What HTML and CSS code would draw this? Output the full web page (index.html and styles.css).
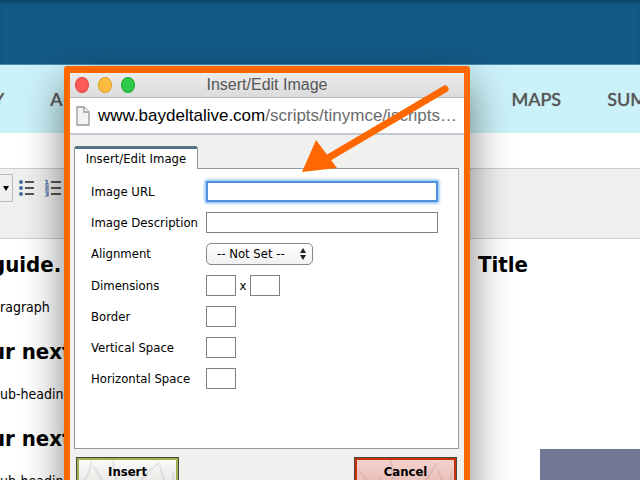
FILE: index.html
```html
<!DOCTYPE html>
<html lang="en">

<head>
    <meta charset="UTF-8">
    <meta name="viewport" content="width=device-width, initial-scale=1.0">
    <title>Insert/Edit Image</title>
    <link rel="stylesheet" href="styles.css">
</head>

<body>
    <header class="banner"></header>

    <nav class="main-nav">
        <ul>
            <li><a href="#">Y</a></li>
            <li><a href="#">A</a></li>
        </ul>
        <ul>
            <li><a href="#">MAPS</a></li>
            <li><a href="#">SUM</a></li>
        </ul>
    </nav>

    <div class="toolbar">
        <button class="tool-drop" type="button" aria-label="More">
            <svg width="6" height="5" viewBox="0 0 6 5"><path d="M0 0h6L3 5z" fill="#000"/></svg>
        </button>
        <button class="tool-btn" type="button" aria-label="Bulleted list">
            <svg width="17" height="18" viewBox="0 0 17 18">
                <g fill="#4667a8"><circle cx="2" cy="3" r="2"/><circle cx="2" cy="9" r="2"/><circle cx="2" cy="15" r="2"/></g>
                <path d="M6 3h9M6 9h9M6 15h9" stroke="#222" stroke-width="1.4"/>
            </svg>
        </button>
        <button class="tool-btn" type="button" aria-label="Numbered list">
            <svg width="17" height="18" viewBox="0 0 17 18">
                <path d="M0 1.500h2V5M0 5h4M0 7h3v2H1v2h3M0 13h3v2H1h2v2H0" fill="none" stroke="#4667a8" stroke-width="1.2"/>
                <path d="M6 3h10M6 9h10M6 15h10" stroke="#222" stroke-width="1.4"/>
            </svg>
        </button>
    </div>

    <main class="editor">
        <div class="editor-left">
            <h2>guide.</h2>
            <p>ragraph</p>
            <h2>ur next</h2>
            <p>ub-heading</p>
            <h2>ur next</h2>
            <p>ub-heading</p>
        </div>
        <div class="editor-right">
            <h2>Title</h2>
            <div class="picture"></div>
        </div>
    </main>

    <!-- Popup window -->
    <section class="popup">
        <div class="title-bar">
            <div class="lights">
                <span class="light red"></span>
                <span class="light yellow"></span>
                <span class="light green"></span>
            </div>
            <h1>Insert/Edit Image</h1>
        </div>

        <div class="address-bar">
            <svg width="14" height="20" viewBox="0 0 14 20">
                <path d="M1 1h7l5 5v13H1z" fill="#f3f3f3" stroke="#999" stroke-width="1.3"/>
                <path d="M8 1v5h5" fill="#fff" stroke="#999" stroke-width="1.3"/>
            </svg>
            <p><span class="host">www.baydeltalive.com</span>/scripts/tinymce/jscripts…</p>
        </div>

        <form class="popup-body">
            <a class="tab" href="#panel">Insert/Edit Image</a>
            <div class="panel" id="panel">
                <div class="row">
                    <label for="url">Image URL</label>
                    <input class="wide active" type="text" id="url">
                </div>
                <div class="row">
                    <label for="description">Image Description</label>
                    <input class="wide" type="text" id="description">
                </div>
                <div class="row select-row">
                    <label for="align">Alignment</label>
                    <div class="select-box">
                        <select id="align">
                            <option>-- Not Set --</option>
                        </select>
                        <svg width="6" height="12" viewBox="0 0 6 12"><path d="M0 5h6L3 0zM0 7h6l-3 5z" fill="#222"/></svg>
                    </div>
                </div>
                <div class="row">
                    <label for="width">Dimensions</label>
                    <div class="pair">
                        <input class="small" type="text" id="width">
                        <label for="height">x</label>
                        <input class="small" type="text" id="height">
                    </div>
                </div>
                <div class="row">
                    <label for="border">Border</label>
                    <input class="small" type="text" id="border">
                </div>
                <div class="row">
                    <label for="vspace">Vertical Space</label>
                    <input class="small" type="text" id="vspace">
                </div>
                <div class="row">
                    <label for="hspace">Horizontal Space</label>
                    <input class="small" type="text" id="hspace">
                </div>
            </div>

            <div class="actions">
                <button class="action insert" type="button">
                    <svg viewBox="0 0 98 26"><path d="M4 26Q12 16 14 3M28 26L16 8M38 26Q38 14 34 0M60 26Q64 16 80 4M86 26L80 6M92 26L94 12"/></svg>
                    <span>Insert</span>
                </button>
                <button class="action cancel" type="button">
                    <svg viewBox="0 0 98 26"><path d="M4 12L16 26M18 26L26 18M36 26Q38 14 34 0M66 26Q72 16 80 4M86 26L80 10M92 26L94 12"/></svg>
                    <span>Cancel</span>
                </button>
            </div>
        </form>
    </section>

    <svg class="arrow" width="152" height="94" viewBox="0 0 152 94">
        <path d="M145 9L28 78" fill="none" stroke="#ff6700" stroke-width="7" stroke-linecap="round"/>
        <path d="M2 92L16 60L37 88z" fill="#ff6700"/>
    </svg>
</body>

</html>
```

FILE: styles.css
```css
/* General styles */
* {
    margin: 0;
    padding: 0;
    box-sizing: border-box;
}

body {
    position: relative;
    display: flex;
    flex-direction: column;
    height: 100vh;
    overflow: hidden;
    background-color: #fff;
    color: #000;
    font-family: "DejaVu Sans Condensed", "DejaVu Sans", sans-serif;
    font-size: 13px;
    line-height: 16px;
}

svg {
    display: block;
    flex: none;
}

a {
    color: inherit;
    text-decoration: none;
}

.banner {
    flex: none;
    height: 65px;
    background-color: #145a86;
    border-bottom: 1px solid #4a8aa8;
    box-shadow: inset 0 4px 4px -2px #0c3f5e;
}

/* Navigation */
.main-nav {
    flex: none;
    display: flex;
    justify-content: space-between;
    height: 68px;
    padding-top: 22px;
    margin: 0 -7px;
    background-color: #cbf1f9;
    color: #555;
    font-family: Lato, sans-serif;
    font-size: 18px;
    font-weight: 500;
    line-height: 24px;
    text-shadow: 0 0 1px #888;
}

.main-nav ul {
    display: flex;
    gap: 46px;
    list-style-type: none;
}

/* Toolbar */
.toolbar {
    flex: none;
    display: flex;
    align-items: flex-start;
    height: 71px;
    margin-top: 35px;
    padding-top: 5px;
    background-color: #f0f0ee;
    border-top: 1px solid #ccc;
    border-bottom: 1px solid #ccc;
}

.tool-drop,
.tool-btn {
    display: flex;
    align-items: center;
    height: 28px;
    border: none;
    background: none;
}

.tool-drop {
    width: 13px;
    padding-left: 3px;
    border: 1px solid #bbb;
    border-left: none;
}

.tool-btn {
    width: 26px;
    padding-left: 6px;
}

/* Editor content */
.editor {
    flex: 1;
    display: flex;
    justify-content: space-between;
    min-height: 0;
}

.editor h2 {
    font-size: 22px;
    line-height: 28px;
}

.editor-left {
    width: 64px;
    padding-top: 12px;
    overflow: hidden;
    white-space: nowrap;
}

.editor-left h2 {
    margin-left: -9px;
}

.editor-left p {
    margin: 20px 0 23px;
    font-size: 14px;
}

.editor-right {
    display: flex;
    flex-direction: column;
    width: 162px;
    padding-top: 12px;
}

.picture {
    flex: 1;
    margin: 170px 0 0 62px;
    background-color: #737796;
}

/* Popup */
.popup {
    position: absolute;
    top: 66px;
    left: 64px;
    right: 170px;
    border: 6px solid #ff6700;
    border-top-width: 7px;
    border-radius: 3px;
    background-color: #f0f0ee;
    box-shadow: 0 18px 40px rgba(0, 0, 0, 0.5);
}

.title-bar {
    display: grid;
    grid-template-columns: 76px 1fr 76px;
    align-items: center;
    height: 25px;
    padding: 0 5px;
    background-image: linear-gradient(#ececec, #dcdcdc);
    border-bottom: 1px solid #b8b8bc;
}

.title-bar h1 {
    color: #555;
    font-family: "Liberation Sans", sans-serif;
    font-size: 16px;
    font-weight: normal;
    line-height: 20px;
    text-align: center;
}

.lights {
    display: flex;
    gap: 9px;
}

.light {
    width: 14px;
    height: 16px;
    border-radius: 50%;
}

.red {
    background-color: #fc5b57;
    border: 1px solid #e2463f;
}

.yellow {
    background-color: #fdbc40;
    border: 1px solid #dfa023;
}

.green {
    background-color: #2fca49;
    border: 1px solid #1bac2c;
}

.address-bar {
    display: flex;
    align-items: center;
    gap: 8px;
    height: 37px;
    padding-left: 6px;
    background-color: #fff;
    border-bottom: 2px solid #c5c8d2;
    color: #6b6b6b;
    font-family: "Liberation Sans", sans-serif;
    font-size: 17px;
    line-height: 24px;
    white-space: nowrap;
}

.host {
    color: #000;
}

.popup-body {
    padding: 11px 5px 10px 4px;
}

.tab {
    position: relative;
    display: block;
    width: 124px;
    height: 23px;
    padding-top: 2px;
    background-color: #fff;
    border: 1px solid #919b9c;
    border-top: 3px solid #55728a;
    border-bottom: none;
    border-radius: 3px 3px 0 0;
    text-align: center;
    line-height: 16px;
}

.panel {
    height: 281px;
    margin-top: -1px;
    padding: 7px 16px;
    background-color: #fff;
    border: 1px solid #919b9c;
}

.row {
    display: grid;
    grid-template-columns: 115px 1fr;
    align-items: center;
    height: 31px;
}

.select-row {
    height: 32px;
}

.row input {
    height: 21px;
    padding: 0 3px;
    border: 1px solid #808080;
    background-color: #fff;
    font: inherit;
}

.row .wide {
    width: 100%;
    max-width: 232px;
}

.row .small {
    width: 30px;
}

.row .active {
    border: 2px solid #4f93de;
    box-shadow: 0 0 3px 1px #6db0f5;
}

.pair {
    display: flex;
    align-items: center;
    gap: 3px;
}

.pair label {
    width: 8px;
    text-align: center;
}

.select-box {
    position: relative;
    width: 107px;
}

.select-box select {
    display: block;
    width: 100%;
    height: 22px;
    padding-left: 10px;
    appearance: none;
    background-image: linear-gradient(#fff, #f1f1f1);
    border: 1px solid #888;
    border-radius: 5px;
    color: #000;
    font: inherit;
}

.select-box svg {
    position: absolute;
    top: 5px;
    right: 7px;
    pointer-events: none;
}

/* Buttons */
.actions {
    display: flex;
    justify-content: space-between;
    padding: 8px 2px 0;
}

.action {
    position: relative;
    width: 103px;
    height: 30px;
    border: 1px solid #4a4a3c;
    font: inherit;
    font-weight: bold;
}

.action svg {
    position: absolute;
    inset: 0;
    width: 100%;
    height: 100%;
    fill: none;
    stroke: rgba(80, 80, 80, 0.1);
    stroke-width: 2;
}

.action span {
    position: relative;
}

.insert {
    background-image: linear-gradient(#fbfbfa, #e6e6e3);
    box-shadow: inset 0 0 0 2px #9fb052;
}

.cancel {
    background-image: linear-gradient(#f5d3cf, #e8bbb5);
    box-shadow: inset 0 0 0 2px #cc2f0c;
}

/* Arrow pointing at the URL field */
.arrow {
    position: absolute;
    top: 80px;
    left: 300px;
    pointer-events: none;
}
```
